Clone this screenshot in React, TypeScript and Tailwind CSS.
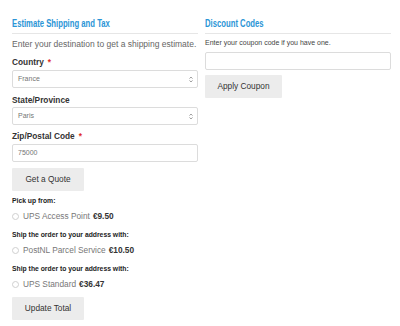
import { ReactNode } from "react";

const heading =
  "origin-left scale-x-[0.7] whitespace-nowrap font-['Liberation_Sans',Arial,sans-serif] font-bold text-[11px] leading-[14px] text-[#2b95d6]";

const Label = ({ children, required }: { children: ReactNode; required?: boolean }) => (
  <div className="text-[8.3px] font-bold leading-[12px] text-[#333]">
    {children}
    {required && <span className="ml-[4px] text-[#e02b27]">*</span>}
  </div>
);

const Select = ({ value, className }: { value: string; className: string }) => (
  <div
    className={`flex h-[18px] items-center justify-between rounded-[2px] border border-[#dcdcdc] bg-white pl-[5px] pr-[4px] ${className}`}
  >
    <span className="text-[7px] text-[#757575]">{value}</span>
    <svg width="4" height="7" viewBox="0 0 4 7" className="text-[#888]">
      <path d="M0.5 2.6 L2 1 L3.5 2.6 M0.5 4.4 L2 6 L3.5 4.4" fill="none" stroke="currentColor" strokeWidth="0.8" />
    </svg>
  </div>
);

const Button = ({ children, className }: { children: ReactNode; className: string }) => (
  <button className={`h-[23px] rounded-[1px] bg-[#ececec] text-[8.3px] text-[#333] ${className}`}>
    {children}
  </button>
);

const Rate = ({ group, name, price, className }: { group: string; name: string; price: string; className?: string }) => (
  <div className={className}>
    <div className="text-[6.8px] font-bold leading-[10px] text-[#222]">{group}</div>
    <div className="mt-[5px] flex items-center leading-[10px]">
      <span className="size-[7px] rounded-full border border-[#cfcfcf] bg-white" />
      <span className="ml-[4px] text-[8.3px] text-[#777]">{name}</span>
      <span className="ml-[3px] text-[8.3px] font-bold text-[#333]">{price}</span>
    </div>
  </div>
);

export default function App() {
  return (
    <div className="flex h-[326px] w-[400px] gap-[7px] bg-white pl-3 pr-[9px] font-['Liberation_Sans',Arial,sans-serif]">
      <div className="flex w-[186px] flex-col">
        <div className="flex border-b border-[#e6e6e6] pb-[3px] pt-4">
          <h2 className={heading}>Estimate Shipping and Tax</h2>
        </div>
        <p className="mt-[4px] text-[8.5px] leading-[12px] text-[#666]">
          Enter your destination to get a shipping estimate.
        </p>
        <div className="mt-[6px]">
          <Label required>Country</Label>
        </div>
        <Select value="France" className="mt-[2px]" />
        <div className="mt-[6px]">
          <Label>State/Province</Label>
        </div>
        <Select value="Paris" className="mt-[1px]" />
        <div className="mt-[5px]">
          <Label required>Zip/Postal Code</Label>
        </div>
        <div className="mt-[2px] flex h-[18px] items-center rounded-[2px] border border-[#dcdcdc] pl-[5px] text-[7px] text-[#757575]">
          75000
        </div>
        <Button className="mt-[6px] w-[72px]">Get a Quote</Button>
        <Rate className="mt-[5px]" group="Pick up from:" name="UPS Access Point" price="€9.50" />
        <Rate className="mt-[9px]" group="Ship the order to your address with:" name="PostNL Parcel Service" price="€10.50" />
        <Rate className="mt-[9px]" group="Ship the order to your address with:" name="UPS Standard" price="€36.47" />
        <Button className="mt-[8px] w-[72px]">Update Total</Button>
      </div>
      <div className="flex w-[186px] flex-col">
        <div className="flex border-b border-[#e6e6e6] pb-[3px] pt-4">
          <h2 className={heading}>Discount Codes</h2>
        </div>
        <p className="mt-[3px] text-[7px] leading-[12px] text-[#444]">Enter your coupon code if you have one.</p>
        <div className="mt-[3px] h-[18px] rounded-[2px] border border-[#dcdcdc]" />
        <Button className="mt-[5px] h-[22px] w-[77px]">Apply Coupon</Button>
      </div>
    </div>
  );
}
